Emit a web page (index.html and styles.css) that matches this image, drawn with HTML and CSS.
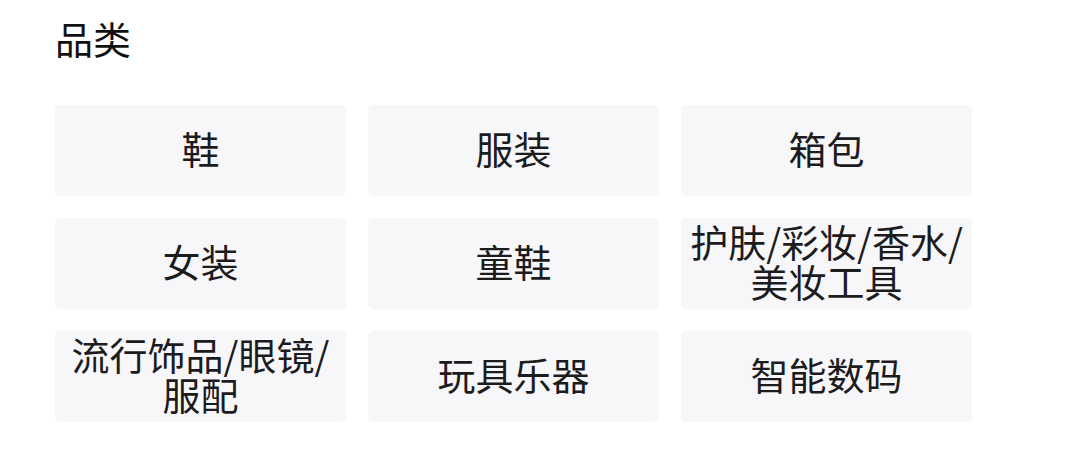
FILE: index.html
```html
<!DOCTYPE html>
<html lang="zh-CN">
<head>
<meta charset="utf-8">
<title>品类</title>
<link rel="stylesheet" href="styles.css">
</head>
<body>
  <section class="category">
    <h2 class="category-title">品类</h2>
    <ul class="category-grid">
      <li class="category-item">鞋</li>
      <li class="category-item">服装</li>
      <li class="category-item">箱包</li>
      <li class="category-item">女装</li>
      <li class="category-item">童鞋</li>
      <li class="category-item">护肤/彩妆/香水/美妆工具</li>
      <li class="category-item">流行饰品/眼镜/服配</li>
      <li class="category-item">玩具乐器</li>
      <li class="category-item">智能数码</li>
    </ul>
  </section>
</body>
</html>
```
FILE: styles.css
```css
html, body {
  margin: 0;
  padding: 0;
  background: #ffffff;
}

body {
  font-family: "Noto Sans CJK SC", "Noto Sans", sans-serif;
  color: #1c1c1e;
}

.category {
  padding: 0 55px;
}

.category-title {
  margin: 0;
  padding-top: 16px;
  height: 105px;
  box-sizing: border-box;
  font-size: 38px;
  font-weight: 400;
  line-height: 44px;
  color: #111111;
}

.category-grid {
  list-style: none;
  margin: 0;
  padding: 0;
  display: grid;
  grid-template-columns: repeat(3, 291px);
  grid-auto-rows: 90.5px;
  column-gap: 22px;
  row-gap: 22.5px;
}

.category-item {
  display: flex;
  align-items: center;
  justify-content: center;
  padding: 0 6px 5px;
  background: #f7f7f9;
  border-radius: 5px;
  font-size: 38px;
  line-height: 40px;
  text-align: center;
}
```
